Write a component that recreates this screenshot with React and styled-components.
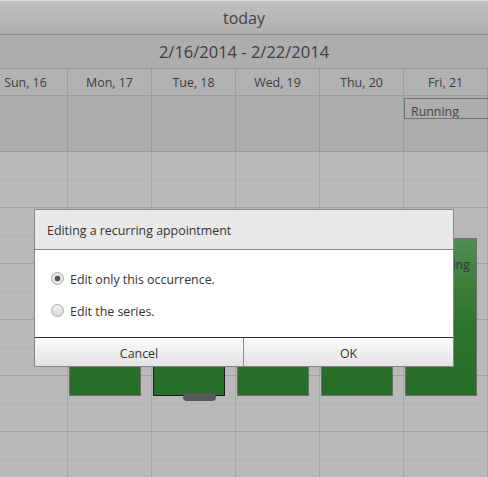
import React from 'react';
import styled, { createGlobalStyle } from 'styled-components';

const GlobalStyle = createGlobalStyle`
  html, body { margin: 0; padding: 0; }
  body {
    background: #b9b9b9;
    font-family: "Open Sans", "Noto Sans", sans-serif;
    overflow: hidden;
  }
  * { box-sizing: border-box; }
`;

const COL = 84;
const DAYS = ['Sun, 16', 'Mon, 17', 'Tue, 18', 'Wed, 19', 'Thu, 20', 'Fri, 21', ''];
const ROWS = 12;

const Scheduler = styled.div`
  position: relative;
  width: 488px;
  height: 477px;
  overflow: hidden;
  background: #b9b9b9;
  color: #3d3d3d;
`;

const Toolbar = styled.div`
  height: 35px;
  border-top: 1px solid #dedede;
  border-bottom: 1px solid #8a8a8a;
  background: linear-gradient(#bfbfbf, #afafaf);
  display: flex;
  align-items: center;
  justify-content: center;
  font-size: 16px;
  color: #444;
`;

const DateBar = styled.div`
  height: 34px;
  border-bottom: 1px solid #989898;
  background: #adadad;
  display: flex;
  align-items: center;
  justify-content: center;
  font-size: 16.5px;
  color: #3f3f3f;
`;

const Viewport = styled.div`
  overflow: hidden;
`;

const Week = styled.div`
  width: ${COL * 7}px;
  margin-left: -16px;
`;

const Row = styled.div`
  position: relative;
  display: grid;
  grid-template-columns: repeat(7, ${COL}px);
  background: ${p => p.$bg || 'transparent'};
`;

const HeadCell = styled.div`
  height: 27px;
  border-right: 1px solid #9c9c9c;
  border-bottom: 1px solid #9c9c9c;
  display: flex;
  align-items: center;
  justify-content: center;
  font-size: 12.4px;
  color: #3d3d3d;
`;

const AllDayCell = styled.div`
  height: 56px;
  border-right: 1px solid #9c9c9c;
  border-bottom: 1px solid #999;
`;

const AllDayEvent = styled.div`
  position: absolute;
  left: ${p => p.$day * COL}px;
  top: 2px;
  width: 160px;
  height: 21px;
  border: 1px solid #747474;
  overflow: hidden;
  padding: 4px 6px 0;
  line-height: 17px;
  font-size: 12.4px;
  color: #444;
`;

const TimeGrid = styled.div`
  position: relative;
`;

const SlotCell = styled.div`
  height: 28px;
  border-right: 1px solid #a6a6a6;
  border-bottom: 1px ${p => (p.$major ? 'solid #a0a0a0' : 'dotted #a9a9a9')};
`;

const Event = styled.div`
  position: absolute;
  left: ${p => p.$day * COL + 1}px;
  top: ${p => p.$top}px;
  width: 72px;
  height: ${p => p.$height}px;
  border: 1px solid ${p => (p.$selected ? '#1a1a1a' : '#707070')};
  background: linear-gradient(#528d52 0%, #3c7e3c 30%, #2c742c 55%, #276c27 100%);
  padding: 17px 4px 0 16px;
  line-height: 17px;
  font-size: 12.4px;
  color: #333;
  white-space: nowrap;
`;

const ResizeHandle = styled.div`
  position: absolute;
  left: 29px;
  bottom: -6px;
  width: 33px;
  height: 8px;
  border-radius: 4px;
  background: #585858;
`;

const Dialog = styled.div`
  position: absolute;
  left: 34px;
  top: 209px;
  width: 420px;
  border: 1px solid #868686;
  background: #fff;
  display: flex;
  flex-direction: column;
  font-size: 12.4px;
  color: #333;
`;

const DialogTitle = styled.div`
  height: 40px;
  border-bottom: 1px solid #888;
  background: #e9e9e9;
  display: flex;
  align-items: center;
  padding: 2px 12px 0;
`;

const DialogBody = styled.div`
  height: 88px;
  border-bottom: 1px solid #2e2e2e;
  background: #fff;
  display: flex;
  flex-direction: column;
  gap: 12px;
  padding: 20px 16px 0;
`;

const Option = styled.label`
  display: flex;
  align-items: flex-start;
  gap: 6px;
  line-height: 20px;
  height: 20px;
`;

const Radio = styled.input.attrs({ type: 'radio' })`
  appearance: none;
  -webkit-appearance: none;
  margin: 1.5px 0 0;
  width: 13px;
  height: 13px;
  border-radius: 50%;
  border: 1px solid #a9a9a9;
  background: ${p =>
    p.checked
      ? 'radial-gradient(circle, #555 0 2.6px, #e9e9e9 3.2px, #dcdcdc 100%)'
      : 'linear-gradient(#f2f2f2, #d9d9d9)'};
  flex: none;
`;

const Footer = styled.div`
  display: grid;
  grid-template-columns: 1fr 1fr;
  height: 28px;
`;

const Button = styled.button`
  border: none;
  border-right: ${p => (p.$divider ? '1px solid #8a8a8a' : 'none')};
  background: linear-gradient(#fbfbfb, #e3e3e3);
  font: inherit;
  color: #333;
  padding: 3px 0 0;
  margin: 0;
  cursor: pointer;
`;

export default function App() {
  const slots = Array.from({ length: ROWS }, (_, r) => r);
  return (
    <>
      <GlobalStyle />
      <Scheduler>
        <Toolbar>today</Toolbar>
        <DateBar>2/16/2014 - 2/22/2014</DateBar>
        <Viewport>
          <Week>
            <Row $bg="#b2b2b2">
              {DAYS.map((d, i) => (
                <HeadCell key={i}>{d}</HeadCell>
              ))}
            </Row>
            <Row $bg="#adadad">
              {DAYS.map((d, i) => (
                <AllDayCell key={i} />
              ))}
              <AllDayEvent $day={5}>Running</AllDayEvent>
            </Row>
            <TimeGrid>
              {slots.map(r => (
                <Row key={r}>
                  {DAYS.map((d, i) => (
                    <SlotCell key={i} $major={r % 2 === 1} />
                  ))}
                </Row>
              ))}
              {[1, 2, 3, 4, 5].map(day => (
                <Event key={day} $day={day} $top={86} $height={158} $selected={day === 2}>
                  {day === 5 ? 'Running' : ''}
                  {day === 2 && <ResizeHandle />}
                </Event>
              ))}
            </TimeGrid>
          </Week>
        </Viewport>

        <Dialog role="dialog">
          <DialogTitle>Editing a recurring appointment</DialogTitle>
          <DialogBody>
            <Option>
              <Radio name="edit" checked readOnly />
              Edit only this occurrence.
            </Option>
            <Option>
              <Radio name="edit" checked={false} readOnly />
              Edit the series.
            </Option>
          </DialogBody>
          <Footer>
            <Button $divider>Cancel</Button>
            <Button>OK</Button>
          </Footer>
        </Dialog>
      </Scheduler>
    </>
  );
}
